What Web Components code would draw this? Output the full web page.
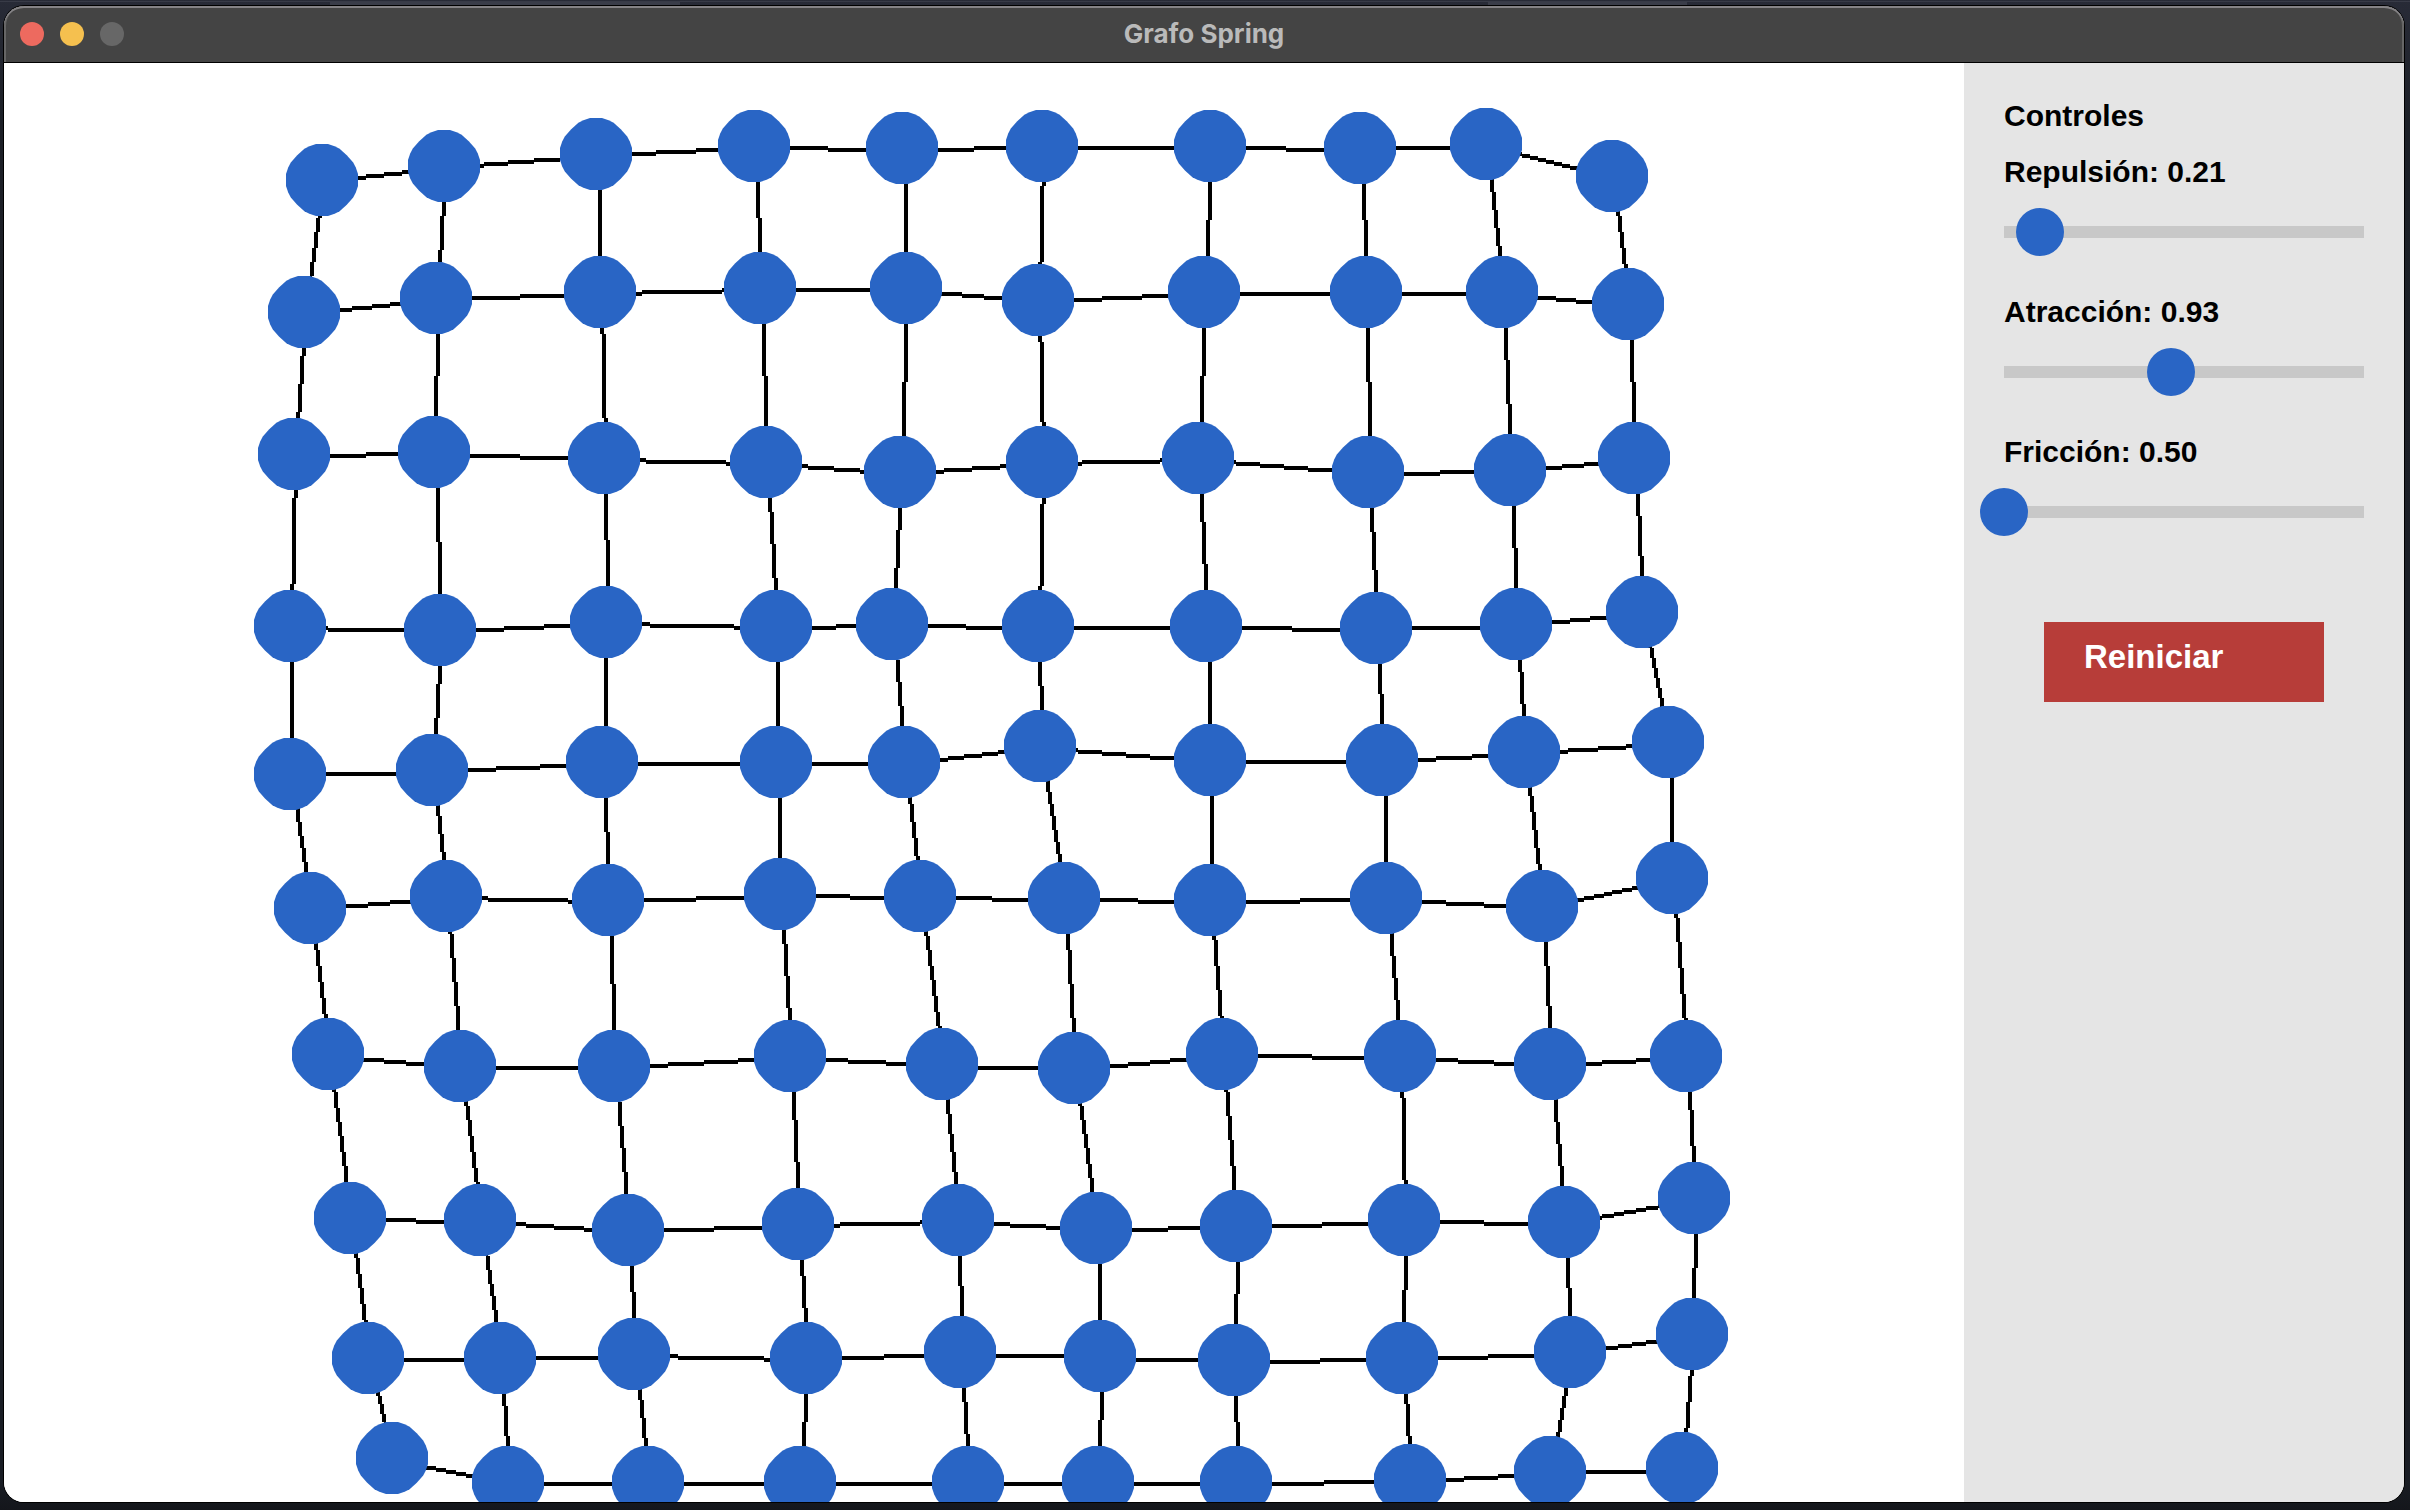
<!DOCTYPE html>
<html lang="es">
<head>
<meta charset="utf-8">
<title>Grafo Spring</title>
<style>
html, body { height: 100%; }
body {
  margin: 0;
  box-sizing: border-box;
  padding: 6px 6px 8px 4px;
  overflow: hidden;
  background:
    linear-gradient(#3a3d49, #3a3d49) 330px 2px / 350px 3px no-repeat,
    linear-gradient(#3a3d49, #3a3d49) 1488px 2px / 199px 3px no-repeat,
    linear-gradient(#383b47, #383b47) 0 1px / 100% 1px no-repeat,
    linear-gradient(#282b37 0, #1c2027 120px, #191d24 1480px, #14161b 100%);
}
</style>
</head>
<body>
<app-window heading="Grafo Spring">
  <spring-graph></spring-graph>
  <control-panel heading="Controles">
    <value-slider name="Repulsión" min="0" max="2.1" value="0.21"></value-slider>
    <value-slider name="Atracción" min="0" max="2" value="0.93"></value-slider>
    <value-slider name="Fricción" min="0.5" max="1" value="0.5"></value-slider>
    <reset-button slot="actions">Reiniciar</reset-button>
  </control-panel>
</app-window>

<script>
class AppWindow extends HTMLElement {
  connectedCallback() {
    this.attachShadow({ mode: 'open' }).innerHTML = `
      <style>
        :host {
          display: flex; flex-direction: column; height: 100%;
          border-radius: 20px; overflow: hidden; background: #fff;
          box-shadow: 0 0 0 1px #000;
        }
        header {
          display: grid; grid-template-columns: 1fr auto 1fr; align-items: center;
          flex: none; height: 56px; box-sizing: border-box; padding: 0 16px;
          position: relative; z-index: 1;
          background: #444; border-radius: 20px 20px 0 0;
          box-shadow: 0 1px #000, inset 0 2px #858386, inset 2px 0 #666, inset -2px 0 #666;
        }
        .lights { display: flex; gap: 16px; }
        .lights button {
          width: 24px; height: 24px; padding: 0; border: 0; border-radius: 50%;
        }
        .close { background: #ed6a5f; }
        .min { background: #f5c04f; }
        .zoom { background: #676767; }
        h1 { margin: 0; font: 700 26px/32px Inter, sans-serif; color: #bababa; }
        main { display: flex; flex: 1; min-height: 0; }
      </style>
      <header>
        <div class="lights">
          <button class="close" aria-label="Cerrar"></button>
          <button class="min" aria-label="Minimizar"></button>
          <button class="zoom" aria-label="Ampliar" disabled></button>
        </div>
        <h1></h1>
      </header>
      <main><slot></slot></main>`;
    this.shadowRoot.querySelector('h1').textContent = this.getAttribute('heading');
  }
}

const MESH = [
  [[159,59],[220,52],[296,46],[375,42],[449,43],[519,42],[603,42],[678,43],[741,41],[804,57]],
  [[150,125],[216,118],[298,115],[378,113],[451,113],[517,119],[600,115],[681,115],[749,115],[812,121]],
  [[145,196],[215,195],[300,198],[381,200],[448,205],[519,200],[597,198],[682,205],[753,204],[815,198]],
  [[143,282],[218,284],[301,280],[386,282],[444,281],[517,282],[601,282],[686,283],[756,281],[819,275]],
  [[143,356],[214,354],[299,350],[386,350],[450,350],[518,342],[603,349],[689,349],[760,345],[832,340]],
  [[153,423],[221,417],[302,419],[388,416],[458,417],[530,418],[603,419],[691,418],[769,422],[834,408]],
  [[162,496],[228,502],[305,502],[393,497],[469,501],[535,503],[609,496],[698,497],[773,501],[841,497]],
  [[173,578],[238,579],[312,584],[397,581],[477,579],[546,583],[616,582],[700,579],[780,580],[845,568]],
  [[182,648],[248,648],[315,646],[401,648],[478,645],[548,647],[615,649],[699,648],[783,645],[844,636]],
  [[194,698],[252,710],[322,710],[398,710],[482,710],[547,710],[616,710],[703,709],[773,705],[839,703]]
];

/* Two-unit-thick line made of whole-unit runs, without antialiasing. */
function steppedLine([x0, y0], [x1, y1]) {
  const flat = Math.abs(x1 - x0) >= Math.abs(y1 - y0);
  let [a0, b0, a1, b1] = flat ? [x0, y0, x1, y1] : [y0, x0, y1, x1];
  let d = '', start = a0, prev = b0;
  const emit = (from, to, b) => {
    d += flat ? `M${from} ${b}h${to - from}v2h${from - to}z`
              : `M${b} ${from}v${to - from}h2v${from - to}z`;
  };
  for (let a = a0; a <= a1; a++) {
    const b = Math.round(b0 + (b1 - b0) * (a - a0) / (a1 - a0));
    if (b !== prev) { emit(start, a, prev); start = a; prev = b; }
  }
  emit(start, a1 + 1, prev);
  return d;
}

class SpringGraph extends HTMLElement {
  connectedCallback() {
    let edges = '', nodes = '';
    MESH.forEach((row, r) => row.forEach((p, c) => {
      if (c + 1 < row.length) edges += steppedLine(p, row[c + 1]);
      if (r + 1 < MESH.length) edges += steppedLine(p, MESH[r + 1][c]);
      nodes += `<use href="#node" x="${p[0]}" y="${p[1]}"/>`;
    }));
    this.attachShadow({ mode: 'open' }).innerHTML = `
      <style>
        :host { display: block; flex: 1; min-width: 0; background: #fff; }
        svg { display: block; width: 100%; height: 100%; }
      </style>
      <svg viewBox="0 0 980 720" preserveAspectRatio="xMinYMin slice" role="img" aria-label="Grafo">
        <defs>
          <polygon id="node" fill="#2965c5" points="-3,-18 3,-18 6.3,-16.9 8.8,-15.6 12.4,-12.4 15.6,-8.8 16.9,-6.3 18,-3 18,3 16.9,6.3 15.6,8.8 12.4,12.4 8.8,15.6 6.3,16.9 3,18 -3,18 -6.3,16.9 -8.8,15.6 -12.4,12.4 -15.6,8.8 -16.9,6.3 -18,3 -18,-3 -16.9,-6.3 -15.6,-8.8 -12.4,-12.4 -8.8,-15.6 -6.3,-16.9"/>
        </defs>
        <path d="${edges}" fill="#000" fill-rule="nonzero"/>
        ${nodes}
      </svg>`;
  }
}

class ControlPanel extends HTMLElement {
  connectedCallback() {
    this.attachShadow({ mode: 'open' }).innerHTML = `
      <style>
        :host {
          display: flex; flex-direction: column; flex: none; width: 440px;
          box-sizing: border-box; padding: 36px 40px; background: #e5e5e5;
          font-family: "Liberation Sans", Arial, sans-serif; color: #000;
        }
        h2 { margin: 0 0 20px; font-size: 30px; line-height: 36px; font-weight: 700; }
        .sliders { display: flex; flex-direction: column; gap: 38px; }
        .actions { padding: 86px 40px 0; }
      </style>
      <h2></h2>
      <div class="sliders"><slot></slot></div>
      <div class="actions"><slot name="actions"></slot></div>`;
    this.shadowRoot.querySelector('h2').textContent = this.getAttribute('heading');
  }
}

class ValueSlider extends HTMLElement {
  connectedCallback() {
    const at = n => this.getAttribute(n);
    this.attachShadow({ mode: 'open' }).innerHTML = `
      <style>
        :host { display: flex; flex-direction: column; gap: 18px; }
        label { font-size: 30px; line-height: 36px; font-weight: 700; }
        input {
          -webkit-appearance: none; appearance: none; display: block;
          width: calc(100% + 48px); height: 48px; margin: 0 -24px; background: none;
        }
        input::-webkit-slider-runnable-track {
          height: 48px;
          background: linear-gradient(#c8c8c8, #c8c8c8) center / calc(100% - 48px) 12px no-repeat;
        }
        input::-webkit-slider-thumb {
          -webkit-appearance: none; width: 48px; height: 48px;
          border: 0; border-radius: 50%; background: #2965c5;
        }
      </style>
      <label for="range"></label>
      <input id="range" type="range" min="${at('min')}" max="${at('max')}" step="0.01" value="${at('value')}">`;
    const label = this.shadowRoot.querySelector('label');
    const input = this.shadowRoot.querySelector('input');
    const show = () => { label.textContent = `${at('name')}: ${Number(input.value).toFixed(2)}`; };
    input.addEventListener('input', show);
    show();
  }
}

class ResetButton extends HTMLElement {
  connectedCallback() {
    this.attachShadow({ mode: 'open' }).innerHTML = `
      <style>
        :host { display: block; }
        button {
          display: flex; align-items: flex-start; width: 100%; height: 80px;
          padding: 17px 40px; border: 0; background: #b73d39; color: #fff;
          font: 700 33px/36px "Liberation Sans", Arial, sans-serif;
        }
      </style>
      <button type="button"><slot></slot></button>`;
  }
}

customElements.define('app-window', AppWindow);
customElements.define('spring-graph', SpringGraph);
customElements.define('control-panel', ControlPanel);
customElements.define('value-slider', ValueSlider);
customElements.define('reset-button', ResetButton);
</script>
</body>
</html>
